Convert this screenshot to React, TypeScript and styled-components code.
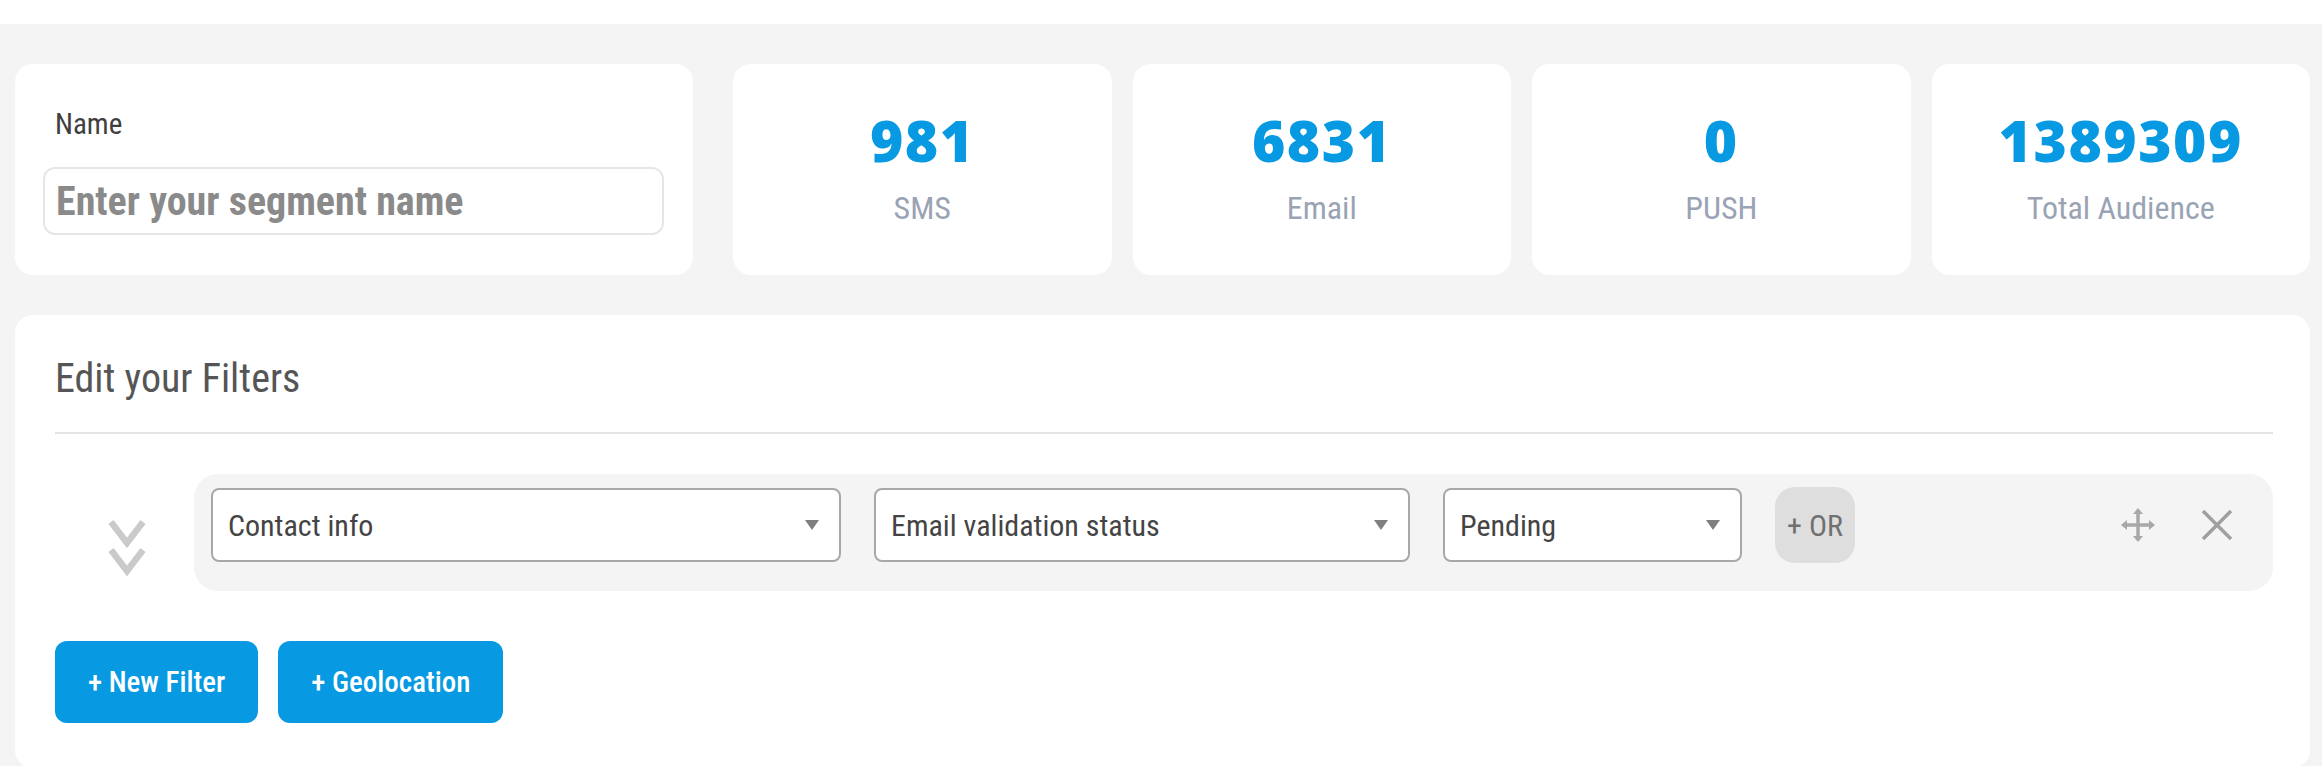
import React from "react"
import styled, { createGlobalStyle } from "styled-components"

const condensed = `"Roboto Condensed", "Liberation Sans Narrow", "Arial Narrow", Roboto, sans-serif`

const GlobalStyle = createGlobalStyle`
  body {
    margin: 0;
    background: #f3f4f3;
    font-family: ${condensed};
  }
`

const TopStrip = styled.div`
  height: 24px;
  background: #ffffff;
`

const Main = styled.main`
  padding: 40px 12px 0 15px;
`

const TopRow = styled.section`
  display: flex;
  gap: 40px;
`

const Card = styled.div`
  background: #ffffff;
  border-radius: 18px;
  box-sizing: border-box;
`

const NameCard = styled(Card)`
  flex: 0 0 678px;
  padding: 44px 29px 40px 28px;
`

const NameLabel = styled.div`
  padding-left: 12px;
  font-size: 29px;
  line-height: 33px;
  font-weight: 400;
  color: #3f3f3f;
`

const NameInput = styled.input`
  display: block;
  width: 100%;
  box-sizing: border-box;
  margin-top: 26px;
  height: 68px;
  padding: 0 11px;
  border: 2px solid #e6e6e6;
  border-radius: 12px;
  font-family: ${condensed};
  font-size: 40px;
  font-weight: 700;
  color: #444;
  outline: none;

  &::placeholder {
    color: #8a8a8a;
  }
`

const StatGroup = styled.div`
  flex: 1;
  display: grid;
  grid-template-columns: repeat(4, 1fr);
  gap: 21px;
`

const StatCard = styled(Card)`
  display: flex;
  flex-direction: column;
  align-items: center;
  justify-content: center;
  gap: 21px;
  height: 211px;
`

const StatNumber = styled.div`
  font-family: "Open Sans", sans-serif;
  font-weight: 800;
  font-size: 57px;
  line-height: 57px;
  letter-spacing: 1.5px;
  color: #0899e3;
`

const StatLabel = styled.div`
  font-size: 32px;
  line-height: 37px;
  color: #9aa3b4;
`

const FiltersCard = styled(Card)`
  margin-top: 40px;
  padding: 39px 37px 45px 40px;
`

const Title = styled.h2`
  margin: 0;
  font-size: 40px;
  line-height: 49px;
  font-weight: 400;
  color: #555555;
`

const Divider = styled.hr`
  margin: 29px 0 0;
  height: 2px;
  border: none;
  background: #e3e3e3;
`

const FilterLine = styled.div`
  display: flex;
  margin-top: 40px;
`

const ChevronCol = styled.div`
  flex: 0 0 139px;
  display: flex;
  justify-content: center;
  box-sizing: border-box;
  padding: 44px 0 0 5px;
`

const FilterRow = styled.div`
  flex: 1;
  display: flex;
  align-items: center;
  gap: 33px;
  padding: 13px 41px 28px 17px;
  background: #f4f4f4;
  border-radius: 24px;
`

const SelectBox = styled.div<{ $width: number }>`
  width: ${(p) => p.$width}px;
  height: 74px;
  box-sizing: border-box;
  display: flex;
  align-items: center;
  justify-content: space-between;
  padding: 0 20px 0 15px;
  background: #ffffff;
  border: 2px solid #a8a8a8;
  border-radius: 8px;
  font-size: 30px;
  color: #444444;
`

const Caret = styled.span`
  width: 0;
  height: 0;
  border-left: 7px solid transparent;
  border-right: 7px solid transparent;
  border-top: 10px solid #7f7f7f;
`

const OrButton = styled.button`
  width: 80px;
  height: 76px;
  border: none;
  border-radius: 20px;
  background: #dedede;
  font-family: ${condensed};
  font-size: 30px;
  color: #707070;
  padding: 0;
`

const IconGroup = styled.div`
  margin-left: auto;
  display: flex;
  align-items: center;
  gap: 46px;
`

const ButtonRow = styled.div`
  display: flex;
  gap: 20px;
  margin-top: 50px;
`

const BlueButton = styled.button`
  height: 82px;
  padding: 0 33px;
  border: none;
  border-radius: 12px;
  background: #0899e3;
  color: #ffffff;
  font-family: ${condensed};
  font-size: 29px;
  font-weight: 500;
`

function DoubleChevron() {
  return (
    <svg width="44" height="58" viewBox="0 0 44 58" style={{ filter: "blur(0.7px)" }}>
      <polyline points="6,4 22,25 38,4" fill="none" stroke="#cacaca" strokeWidth="6.5" />
      <polyline points="6,32 22,53 38,32" fill="none" stroke="#cacaca" strokeWidth="6.5" />
    </svg>
  )
}

function MoveIcon() {
  return (
    <svg width="36" height="36" viewBox="0 0 36 36">
      <g stroke="#a8a8a8" strokeWidth="3.5">
        <line x1="18" y1="5" x2="18" y2="31" />
        <line x1="5" y1="18" x2="31" y2="18" />
      </g>
      <g fill="#a8a8a8">
        <polygon points="18,1 13,7 23,7" />
        <polygon points="18,35 13,29 23,29" />
        <polygon points="1,18 7,13 7,23" />
        <polygon points="35,18 29,13 29,23" />
      </g>
    </svg>
  )
}

function CloseIcon() {
  return (
    <svg width="30" height="30" viewBox="0 0 30 30">
      <g stroke="#a0a0a0" strokeWidth="3.5">
        <line x1="1" y1="1" x2="29" y2="29" />
        <line x1="29" y1="1" x2="1" y2="29" />
      </g>
    </svg>
  )
}

const stats = [
  { value: "981", label: "SMS" },
  { value: "6831", label: "Email" },
  { value: "0", label: "PUSH" },
  { value: "1389309", label: "Total Audience" },
]

export default function App() {
  return (
    <>
      <GlobalStyle />
      <TopStrip />
      <Main>
        <TopRow>
          <NameCard>
            <NameLabel>Name</NameLabel>
            <NameInput placeholder="Enter your segment name" />
          </NameCard>
          <StatGroup>
            {stats.map((s) => (
              <StatCard key={s.label}>
                <StatNumber>{s.value}</StatNumber>
                <StatLabel>{s.label}</StatLabel>
              </StatCard>
            ))}
          </StatGroup>
        </TopRow>

        <FiltersCard>
          <Title>Edit your Filters</Title>
          <Divider />
          <FilterLine>
            <ChevronCol>
              <DoubleChevron />
            </ChevronCol>
            <FilterRow>
              <SelectBox $width={630}>
                <span>Contact info</span>
                <Caret />
              </SelectBox>
              <SelectBox $width={536}>
                <span>Email validation status</span>
                <Caret />
              </SelectBox>
              <SelectBox $width={299}>
                <span>Pending</span>
                <Caret />
              </SelectBox>
              <OrButton>+ OR</OrButton>
              <IconGroup>
                <MoveIcon />
                <CloseIcon />
              </IconGroup>
            </FilterRow>
          </FilterLine>
          <ButtonRow>
            <BlueButton>+ New Filter</BlueButton>
            <BlueButton>+ Geolocation</BlueButton>
          </ButtonRow>
        </FiltersCard>
      </Main>
    </>
  )
}
